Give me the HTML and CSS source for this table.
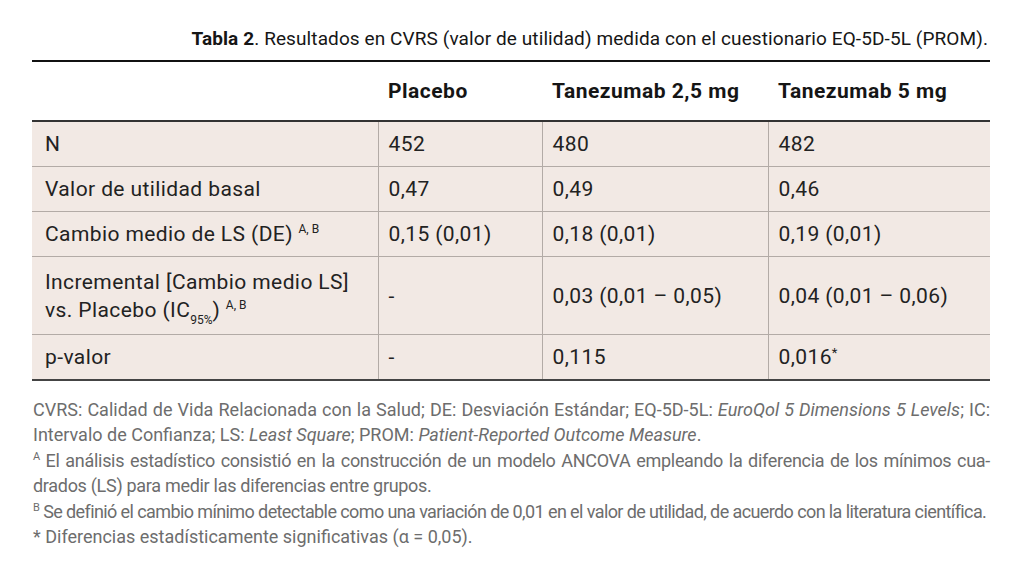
FILE: index.html
```html
<!DOCTYPE html>
<html lang="es">
<head>
<meta charset="utf-8">
<title>Tabla 2</title>
<link rel="stylesheet" href="styles.css">
</head>
<body>
<div class="page">
  <p class="caption"><b>Tabla 2</b>. Resultados en CVRS (valor de utilidad) medida con el cuestionario EQ-5D-5L (PROM).</p>
  <table class="results">
    <colgroup>
      <col class="c1"><col class="c2"><col class="c3"><col class="c4">
    </colgroup>
    <thead>
      <tr>
        <th></th>
        <th>Placebo</th>
        <th>Tanezumab 2,5 mg</th>
        <th>Tanezumab 5 mg</th>
      </tr>
    </thead>
    <tbody>
      <tr><td>N</td><td>452</td><td>480</td><td>482</td></tr>
      <tr><td>Valor de utilidad basal</td><td>0,47</td><td>0,49</td><td>0,46</td></tr>
      <tr><td>Cambio medio de LS (DE) <sup>A, B</sup></td><td>0,15 (0,01)</td><td>0,18 (0,01)</td><td>0,19 (0,01)</td></tr>
      <tr class="tall"><td>Incremental [Cambio medio LS]<br>vs. Placebo (IC<sub>95%</sub>) <sup>A, B</sup></td><td>-</td><td>0,03 (0,01 – 0,05)</td><td>0,04 (0,01 – 0,06)</td></tr>
      <tr><td>p-valor</td><td>-</td><td>0,115</td><td>0,016<sup class="star">*</sup></td></tr>
    </tbody>
  </table>
  <div class="notes">
    <p>CVRS: Calidad de Vida Relacionada con la Salud; DE: Desviación Estándar; EQ-5D-5L: <i>EuroQol 5 Dimensions 5 Levels</i>; IC: Intervalo de Confianza; LS: <i>Least Square</i>; PROM: <i>Patient-Reported Outcome Measure</i>.</p>
    <p class="snug"><sup>A</sup> El análisis estadístico consistió en la construcción de un modelo ANCOVA empleando la diferencia de los mínimos cua-drados (LS) para medir las diferencias entre grupos.</p>
    <p class="tight"><sup>B</sup> Se definió el cambio mínimo detectable como una variación de 0,01 en el valor de utilidad, de acuerdo con la literatura científica.</p>
    <p>* Diferencias estadísticamente significativas (α = 0,05).</p>
  </div>
</div>
</body>
</html>
```

FILE: styles.css
```css
html, body {
  margin: 0;
  padding: 0;
  background: #ffffff;
}

.page {
  width: 958px;
  padding: 0 0 0 32px;
  font-family: Roboto, "Liberation Sans", sans-serif;
  color: #1c1c1c;
}

.caption {
  margin: 0;
  height: 60px;
  box-sizing: border-box;
  padding: 29px 2px 0 0;
  text-align: right;
  font-size: 19px;
  line-height: 20px;
  letter-spacing: 0.1px;
  color: #161616;
  white-space: nowrap;
}

.caption b {
  font-weight: 700;
}

.results {
  width: 958px;
  border-collapse: collapse;
  border-top: 2px solid #111;
  border-bottom: 2px solid #444;
  font-size: 21px;
  letter-spacing: 0.4px;
  table-layout: fixed;
}

.c1 { width: 346px; }
.c2 { width: 164px; }
.c3 { width: 226px; }
.c4 { width: 222px; }

.results th {
  height: 58px;
  padding: 0 10px;
  text-align: left;
  font-weight: 700;
  font-size: 21px;
  letter-spacing: 0.5px;
  color: #151515;
  background: #ffffff;
  border-bottom: 2px solid #333;
  vertical-align: middle;
}

.results td {
  height: 44px;
  padding: 0 10px;
  background: #f2e9e4;
  color: #222;
  vertical-align: middle;
  line-height: 28px;
  border-top: 1px solid #b3aba6;
  border-left: 1px solid #b3aba6;
  white-space: nowrap;
}

.results td:first-child {
  border-left: none;
  padding-left: 13px;
}

.results tbody tr:first-child td {
  border-top: none;
}

.results tr.tall td {
  height: 77px;
}

.results sup {
  font-size: 12px;
  letter-spacing: 0;
  vertical-align: 8px;
  line-height: 0;
}

.results sup.star {
  font-size: 13px;
  vertical-align: 7px;
}

.results sub {
  font-size: 12px;
  letter-spacing: 0;
  vertical-align: -7px;
  line-height: 0;
}

.notes {
  margin-top: 16px;
  width: 958px;
  font-size: 18px;
  line-height: 25.4px;
  color: #6d6d6d;
  text-align: justify;
  text-align-last: left;
}

.notes p {
  margin: 0;
  padding-left: 1px;
}

.notes sup {
  font-size: 11px;
  vertical-align: 7px;
  line-height: 0;
}

.notes .snug {
  letter-spacing: -0.3px;
}

.notes .tight {
  letter-spacing: -0.6px;
  white-space: nowrap;
}
```
